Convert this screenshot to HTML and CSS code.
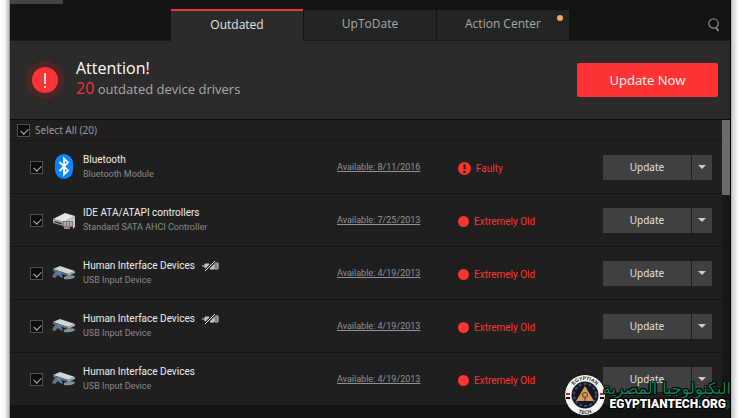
FILE: index.html
```html
<!DOCTYPE html>
<html lang="en">
<head>
<meta charset="utf-8">
<meta name="viewport" content="width=device-width, initial-scale=1">
<title>Driver updates</title>
<link rel="stylesheet" href="styles.css">
</head>
<body>
<svg class="defs" aria-hidden="true">
  <symbol id="usb" viewBox="0 0 24 16">
    <path d="M1 4 L8 1 L23 6 L16 9 Z" fill="#d3d5d4"/>
    <path d="M1 4 L16 9 V11 L1 6 Z" fill="#6c7071"/>
    <path d="M16 9 L23 6 V8 L16 11 Z" fill="#a7abab"/>
    <path d="M2 8 Q5 5 9 7 L11 13 L8 12 L6 10 L3 13 L0 12 Z" fill="#66727c"/>
    <circle cx="7" cy="8" r="1.800" fill="#2f8fe8"/>
    <path d="M12 12 Q17 9 23 11 L22 13 Q17 15 12 14 Z" fill="#87939b"/>
    <path d="M14 13 Q17 11 20 12" stroke="#4a9aca" fill="none"/>
  </symbol>
  <symbol id="unplugged" viewBox="0 0 17 10">
    <path d="M0 5 H4 M3 3 H7 V7 H3 Z M8 5 Q8 2 10 2 H12 V8 H8 Z" fill="#bbb" stroke="#ccc"/>
    <path d="M13 2 H16 V8 H13 Z" fill="#333" stroke="#ccc"/>
    <path d="M14 4 H16 M14 6 H16" stroke="#ccc"/>
    <path d="M3 10 L13 0" stroke="#1f1f1f" stroke-width="3"/>
    <path d="M3 10 L13 0" stroke="#eee" stroke-width="1"/>
  </symbol>
</svg>
<div class="window">
  <header class="top">
    <div class="edge"></div>
    <nav class="tabs">
      <button class="tab active" type="button">Outdated</button>
      <button class="tab" type="button">UpToDate</button>
      <button class="tab" type="button">Action Center<span class="badge"></span></button>
    </nav>
    <button class="search" type="button" aria-label="Search">
      <svg width="12" height="14" viewBox="0 0 12 14" fill="none" stroke="#858585"><circle cx="5.500" cy="5.500" r="4.700" stroke-width="1.300"/><path d="M8 9.500 L10.500 13" stroke-width="2"/></svg>
    </button>
  </header>
  <section class="banner">
    <svg class="alert" width="38" height="38" viewBox="0 0 38 38"><circle cx="19" cy="19" r="19" fill="#4a2627"/><circle cx="19" cy="19" r="13" fill="#ff3333"/><path d="M19 12 V23 M19 25 V27" stroke="#ffe3e0" stroke-width="2"/></svg>
    <div class="message">
      <h1>Attention!</h1>
      <p><span class="count">20</span> outdated device drivers</p>
    </div>
    <button class="update-all" type="button">Update Now</button>
  </section>
  <main class="panel">
    <div class="list">
      <div class="select-all"><input type="checkbox" id="all" checked><label for="all">Select All (20)</label></div>
      <ul class="drivers">
        <li class="driver">
          <input type="checkbox" id="d1" checked>
          <svg class="device" viewBox="0 0 24 26"><rect x="3" y="0" width="18" height="25" rx="9" fill="#0a84ff"/><path d="M7.500 8 L16 16.500 L12 20.500 V4.500 L16 8.500 L7.500 17" fill="none" stroke="#fff" stroke-width="1.800"/></svg>
          <label class="name" for="d1"><span class="title">Bluetooth</span><span class="sub">Bluetooth Module</span></label>
          <a class="date" href="#">Available: 8/11/2016</a>
          <span class="status"><svg class="faulty" width="13" height="13" viewBox="0 0 13 13"><circle cx="6.500" cy="6.500" r="6.500" fill="#ff3333"/><path d="M6.500 2.500 V7.500 M6.500 9 V11" stroke="#241313" stroke-width="2"/></svg>Faulty</span>
          <span class="actions"><button class="update" type="button">Update</button><button class="more" type="button" aria-label="More options"></button></span>
        </li>
        <li class="driver">
          <input type="checkbox" id="d2" checked>
          <svg class="device" viewBox="0 0 24 26"><path d="M1 12 L13 6 L23 9 L12 15 Z" fill="#e4e4e2"/><path d="M1 12 L12 15 V19 L1 16 Z" fill="#aaa"/><path d="M2.500 14 L10 16 V17.500 L2.500 15.500 Z" fill="#393939"/><path d="M12 15 L23 9 V20 L21 22 V17 L12 19 Z" fill="#c9c9c6"/><path d="M11 14 H21 V20 H11 Z" fill="#777"/><path d="M13 15 V19 M16 15 V19 M19 15 V19" stroke="#ddd"/><path d="M12 21 H18" stroke="#b98452" stroke-width="2"/></svg>
          <label class="name" for="d2"><span class="title">IDE ATA/ATAPI controllers</span><span class="sub">Standard SATA AHCI Controller</span></label>
          <a class="date" href="#">Available: 7/25/2013</a>
          <span class="status"><i class="dot"></i>Extremely Old</span>
          <span class="actions"><button class="update" type="button">Update</button><button class="more" type="button" aria-label="More options"></button></span>
        </li>
        <li class="driver">
          <input type="checkbox" id="d3" checked>
          <svg class="device"><use href="#usb"/></svg>
          <label class="name" for="d3"><span class="title">Human Interface Devices<svg class="plug"><use href="#unplugged"/></svg></span><span class="sub">USB Input Device</span></label>
          <a class="date" href="#">Available: 4/19/2013</a>
          <span class="status"><i class="dot"></i>Extremely Old</span>
          <span class="actions"><button class="update" type="button">Update</button><button class="more" type="button" aria-label="More options"></button></span>
        </li>
        <li class="driver">
          <input type="checkbox" id="d4" checked>
          <svg class="device"><use href="#usb"/></svg>
          <label class="name" for="d4"><span class="title">Human Interface Devices<svg class="plug"><use href="#unplugged"/></svg></span><span class="sub">USB Input Device</span></label>
          <a class="date" href="#">Available: 4/19/2013</a>
          <span class="status"><i class="dot"></i>Extremely Old</span>
          <span class="actions"><button class="update" type="button">Update</button><button class="more" type="button" aria-label="More options"></button></span>
        </li>
        <li class="driver">
          <input type="checkbox" id="d5" checked>
          <svg class="device"><use href="#usb"/></svg>
          <label class="name" for="d5"><span class="title">Human Interface Devices</span><span class="sub">USB Input Device</span></label>
          <a class="date" href="#">Available: 4/19/2013</a>
          <span class="status"><i class="dot"></i>Extremely Old</span>
          <span class="actions"><button class="update" type="button">Update</button><button class="more" type="button" aria-label="More options"></button></span>
        </li>
      </ul>
    </div>
    <div class="scrollbar"><div class="thumb"></div></div>
  </main>
  <footer class="bottom"></footer>
</div>
<div class="watermark">
  <svg class="seal" width="42" height="42" viewBox="0 0 42 42">
    <circle cx="21" cy="21" r="20.500" fill="#f4f4f2" stroke="#111"/>
    <circle cx="21" cy="21" r="13.500" fill="#14171d"/>
    <circle cx="21" cy="21" r="11" fill="none" stroke="#31507c" stroke-width="2" stroke-dasharray="3 2"/>
    <path d="M21 12 L30 27 H12 Z" fill="#d69a5f"/>
    <circle cx="21" cy="21" r="2.500" fill="none" stroke="#4d3524"/><path d="M21 24 V27" stroke="#4d3524"/>
    <path d="M2 20 H6 M36 20 H40" stroke="#d22" stroke-width="2"/><path d="M2 24 H6 M36 24 H40" stroke="#111" stroke-width="2"/>
    <path id="arc-top" d="M6 21 A15 15 0 0 1 36 21" fill="none"/>
    <path id="arc-bottom" d="M2 21 A19 19 0 0 0 40 21" fill="none"/>
    <text class="seal-text"><textPath href="#arc-top" startOffset="50%">EGYPTIAN</textPath></text>
    <text class="seal-text"><textPath href="#arc-bottom" startOffset="50%">TECH</textPath></text>
  </svg>
  <div class="brand"><span class="arabic" lang="ar" dir="rtl">التكنولوجيا المصرية</span><span class="latin">EGYPTIANTECH.ORG</span></div>
</div>
</body>
</html>
```
FILE: styles.css
```css
* { box-sizing: border-box; }
body {
  margin: 0;
  min-height: 100vh;
  padding: 0 12px 0 10px;
  background: linear-gradient(to right, #fff 0, #f5f5f5 5px, #bbb 9px, #777 10px, transparent 10px),
    linear-gradient(to left, #fff 0, #fafafa 5px, #ccc 11px, #aaa 12px, transparent 12px), #fff;
  font-family: Roboto, "Open Sans", sans-serif;
  color: #ddd;
}
button { border: 0; padding: 0; font: inherit; color: inherit; cursor: pointer; }
.defs { position: absolute; width: 0; height: 0; }
.window {
  display: flex;
  flex-direction: column;
  min-height: 100vh;
  background: #131313;
  border-right: 1px solid #000;
}
.top {
  display: flex;
  height: 41px;
  border-bottom: 1px solid #1b1b1b;
}
.edge { width: 53px; height: 4px; background: #444; }
.tabs { display: flex; gap: 1px; align-items: flex-end; margin-left: 108px; }
.tab {
  position: relative;
  width: 132px;
  height: 30px;
  padding-bottom: 2px;
  background: #232525;
  color: #aaa;
  font: 12px/18px "Open Sans", sans-serif;
}
.tab.active {
  height: 32px;
  margin-bottom: -1px;
  border-top: 2px solid #ef3535;
  background: #2b2b2b;
  color: #e4e4e4;
}
.badge { position: absolute; top: 5px; right: 6px; width: 6px; height: 6px; border-radius: 50%; background: #f3a765; }
.search { display: flex; margin: 18px 10px 0 auto; background: none; }
.banner {
  display: flex;
  align-items: center;
  height: 78px;
  padding: 0 12px 0 16px;
  background: #2b2b2b;
}
.message { margin: 0 auto 0 12px; padding-bottom: 4px; }
h1 { margin: 0; font: 16px/20px "Open Sans", sans-serif; color: #fff; }
p { margin: 0; font: 13px/20px "Open Sans", sans-serif; color: #aaa; }
.count { font-size: 16px; color: #ef3535; }
.update-all { width: 141px; height: 34px; border-radius: 2px; background: #ff3333; color: #fff0ec; font: 13px/18px "Noto Sans", sans-serif; }
.panel { display: flex; border-top: 1px solid #0d0d0d; background: #1f1f1f; }
.list { flex: 1; min-width: 0; }
.select-all {
  display: flex;
  align-items: center;
  gap: 5px;
  height: 21px;
  padding-left: 7px;
  border-bottom: 1px solid #171717;
  font: 10px/14px "Noto Sans", sans-serif;
  color: #999;
}
input {
  appearance: none;
  width: 13px;
  height: 13px;
  margin: 0;
  border: 1px solid #505050;
  background: #0c0c0c;
}
input:checked::after {
  content: "";
  display: block;
  width: 6px;
  height: 4px;
  margin: 3px 0 0 3px;
  border: solid #b5b5b5;
  border-width: 0 0 1px 1px;
  transform: rotate(-45deg);
}
.drivers { margin: 0; padding: 0; list-style: none; }
.driver {
  display: grid;
  grid-template-columns: 13px 24px 270fr 121fr 145fr 109px;
  align-items: center;
  height: 53px;
  padding: 0 10px 0 20px;
  border-bottom: 1px solid #131313;
}
.device { width: 24px; height: 26px; }
.driver .device { margin-left: 9px; }
.name { display: flex; flex-direction: column; margin-left: 16px; }
.title { display: flex; align-items: center; gap: 7px; font-size: 10px; line-height: 14px; color: #eee; white-space: nowrap; }
.sub { font-size: 9px; line-height: 14px; color: #8a8a8a; white-space: nowrap; }
.plug { width: 17px; height: 10px; }
.date { font-size: 9px; line-height: 12px; color: #929292; white-space: nowrap; }
.status { display: flex; align-items: center; gap: 5px; padding-top: 3px; font-size: 10px; line-height: 14px; color: #ff3333; white-space: nowrap; }
.dot { width: 11px; height: 11px; border-radius: 50%; background: #ff3333; }
.actions { display: flex; gap: 1px; height: 25px; }
.update { flex: 1; background: #404040; color: #e2e2e2; font: 10px/14px "Noto Sans", sans-serif; }
.more { display: flex; align-items: center; justify-content: center; width: 20px; background: #404040; }
.more::before { content: ""; border: 4px solid transparent; border-top-color: #ccc; border-bottom: 0; }
.scrollbar { width: 8px; background: #171717; }
.thumb { height: 75px; background: #6a6b69; }
.bottom { flex: 1; }
.watermark { position: absolute; right: 12px; bottom: 2px; display: flex; align-items: center; }
.brand { display: flex; flex-direction: column; align-items: flex-end; margin-left: -3px; }
.arabic {
  font: 16px/17px "DejaVu Sans", sans-serif;
  color: #08805a;
  white-space: nowrap;
  text-shadow: 1px 1px #000, -1px -1px #000, 1px -1px #000, -1px 1px #000;
}
.latin {
  padding-right: 5px;
  font: 900 12px/14px Roboto, sans-serif;
  color: #fff;
  text-shadow: 1px 1px #000, -1px -1px #000, 1px -1px #000, -1px 1px #000, 4px 1px #064c32;
}
.seal-text { font: bold 5px "Liberation Sans", sans-serif; text-anchor: middle; fill: #222; }
```
